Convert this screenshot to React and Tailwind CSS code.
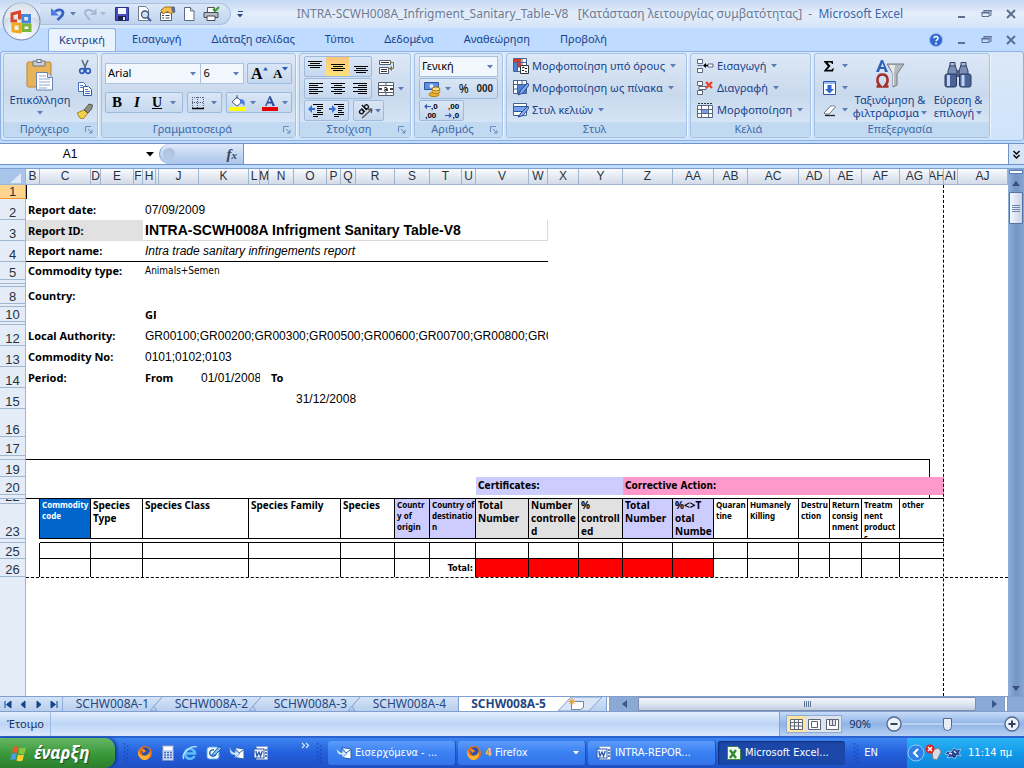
import React from 'react';

const UI = 'font-["Noto_Sans","Open_Sans",sans-serif]';

function Arrow({ className = 'text-[#5b7db5]' }) {
  return (
    <svg width="6" height="4" viewBox="0 0 6 4" className={`shrink-0 ${className}`} aria-hidden="true">
      <path d="M0 0h6L3 3.6z" fill="currentColor" />
    </svg>
  );
}

/* ---------- icons ---------- */

function Svg({ w = 16, h = 16, vb, children, className = '' }) {
  return (
    <svg width={w} height={h} viewBox={vb || `0 0 ${w} ${h}`} className={`shrink-0 ${className}`} aria-hidden="true">
      {children}
    </svg>
  );
}

const IconUndo = () => (
  <Svg>
    <path d="M5 5.500c4-3 8-1.500 8 1.500 0 3-3 4-5.500 7" fill="none" stroke="#3463c4" strokeWidth="2.800" />
    <path d="M1 2v7.500h8z" fill="#4a7be0" />
  </Svg>
);
const IconRedo = () => (
  <Svg>
    <path d="M11 5.500C7 2.500 3 4 3 7c0 3 3 4 5 7" fill="none" stroke="#a9b9d3" strokeWidth="2.200" />
    <path d="M14.500 2v7H8z" fill="#a9b9d3" />
  </Svg>
);
const IconSave = () => (
  <Svg>
    <path d="M1.500 1.500h13v13h-13z" fill="#4a4fc0" stroke="#22308c" />
    <path d="M4 2h8v6H4z" fill="#f4f7ff" />
    <path d="M4 10h8v4.500H4z" fill="#1c2350" />
    <path d="M9 11h2v3H9z" fill="#dfe6fa" />
  </Svg>
);
const IconPreview = () => (
  <Svg>
    <path d="M2.500.5h7l3 3v11h-10z" fill="#fff" stroke="#6f7d94" />
    <circle cx="9" cy="8.500" r="3.500" fill="#cfe3f8" stroke="#40546e" strokeWidth="1.300" />
    <path d="M11.500 11.500l3.500 3.500" stroke="#3b5c9c" strokeWidth="2" />
  </Svg>
);
const IconProps = () => (
  <Svg w={18}>
    <path d="M2.500 6.500h11v8h-11z" fill="#fff" stroke="#56606e" />
    <path d="M4 9.500h2M7.500 9.500h4M4 12h2M7.500 12h4" stroke="#404b60" />
    <path d="M3 4l4-3 9 0 1 5-4 1.500L9 5.500 5 8z" fill="#f2c14e" stroke="#a47318" />
    <path d="M13 1h4v5h-3z" fill="#5b6f96" />
  </Svg>
);
const IconPage = () => (
  <Svg>
    <path d="M3.500 1.500h6l3.500 3.500v9.500H3.500z" fill="#fff" stroke="#5c6c86" />
    <path d="M9.500 1.500V5H13" fill="#d7e0ee" stroke="#5c6c86" />
  </Svg>
);
const IconPrint = () => (
  <Svg w={17}>
    <path d="M4.500 1.500h7V7h-7z" fill="#fff" stroke="#555" />
    <path d="M1 6.500h14v5H1z" fill="#b9bec6" stroke="#444b55" />
    <path d="M4 10h8v4.500H4z" fill="#fff" stroke="#444b55" />
    <path d="M10 3l2 2 4-4" fill="none" stroke="#33a02c" strokeWidth="2" />
  </Svg>
);
const IconPaste = () => (
  <Svg w={28} h={32}>
    <rect x="1" y="3" width="24" height="25" rx="1.500" fill="#e8b45a" stroke="#b98430" />
    <path d="M7 2h12v5H7z" fill="#c8ced6" stroke="#6f7781" />
    <rect x="11" y=".5" width="4" height="3" fill="#eef1f5" stroke="#6f7781" />
    <path d="M10.500 13.500h11l5 5v12.500h-16z" fill="#fff" stroke="#6a83b5" />
    <path d="M21.500 13.500v5h5" fill="#d5e1f4" stroke="#6a83b5" />
    <path d="M13 17h7M13 20h11M13 23h11M13 26h11M13 29h8" stroke="#8ea7d3" />
  </Svg>
);
const IconCut = () => (
  <Svg>
    <path d="M5 1l4 9M11 1L7 10" stroke="#5a6b86" strokeWidth="1.600" />
    <circle cx="5" cy="12" r="2.300" fill="none" stroke="#2c5ab8" strokeWidth="1.700" />
    <circle cx="11" cy="12" r="2.300" fill="none" stroke="#2c5ab8" strokeWidth="1.700" />
  </Svg>
);
const IconCopy = () => (
  <Svg>
    <path d="M1.500 1.500h5l2 2v7h-7z" fill="#fff" stroke="#4a6fb4" />
    <path d="M6.500 5.500h5l3 3v6h-8z" fill="#fff" stroke="#2f5cab" />
    <path d="M3 4.500h3M3 6.500h3M8 8.500h3M8 10.500h5M8 12.500h5" stroke="#4a78c8" />
  </Svg>
);
const IconBrush = () => (
  <Svg>
    <path d="M0 10l7-3 4 3-5 6-3-1z" fill="#f3d04e" stroke="#a98413" />
    <path d="M7 7l5-6 3.500 1-1 4-3.500 4z" fill="#8c8f84" stroke="#55574c" />
  </Svg>
);
const IconBorders = () => (
  <Svg w={14} h={14}>
    <path d="M1 1.500h12M1 6.500h12M1.500 1v11M6.500 1v11M12.500 1v11" stroke="#55627a" strokeDasharray="1 1" />
    <path d="M1 12.500h12" stroke="#000" strokeWidth="1.500" />
  </Svg>
);
const IconFill = () => (
  <Svg>
    <path d="M2 7l5-5 5 5-5 4z" fill="#fff" stroke="#4b5e86" />
    <path d="M7 4V0" stroke="#4b5e86" />
    <path d="M10 4c4 0 6 3 4 7-1-2-2-3-4-3z" fill="#4a7be0" />
    <path d="M0 12h16v4H0z" fill="#ffff00" />
  </Svg>
);
const IconFontColor = () => (
  <Svg>
    <path d="M3 11L7.500 1h1L13 11h-2.500l-1-2.600h-4L4.600 11zM6.200 6.700h2.600L7.500 3.500z" fill="#2a4f9e" />
    <path d="M0 12h16v4H0z" fill="#e60000" />
  </Svg>
);
function Lines({ rows, dy = 0 }) {
  return (
    <Svg w={16} h={14}>
      {rows.map(([x, w], i) => (
        <rect key={i} x={x} y={dy + i * 2} width={w} height="1" fill="#000" />
      ))}
    </Svg>
  );
}
const IconTop = () => <Lines dy={1} rows={[[1, 14], [3, 10], [1, 14], [3, 10]]} />;
const IconMiddle = () => <Lines dy={4} rows={[[1, 14], [3, 10], [1, 14], [3, 10]]} />;
const IconBottom = () => <Lines dy={6} rows={[[1, 14], [3, 10], [1, 14], [3, 10]]} />;
const IconLeft = () => <Lines dy={1} rows={[[1, 14], [1, 9], [1, 14], [1, 9], [1, 14], [1, 9]]} />;
const IconCenter = () => <Lines dy={1} rows={[[1, 14], [4, 8], [1, 14], [4, 8], [1, 14], [4, 8]]} />;
const IconRight = () => <Lines dy={1} rows={[[1, 14], [6, 9], [1, 14], [6, 9], [1, 14], [6, 9]]} />;
const IconIndent = ({ flip }) => (
  <Svg>
    <path d="M5 1.500h10M9 3.500h6M9 5.500h6M9 7.500h4M9 9.500h6M5 11.500h10M5 13.500h5" stroke="#000" />
    <path d={flip ? 'M0 5h3V2l4 4-4 4V7H0z' : 'M7 5H4V2L0 6l4 4V7h3z'} fill="#3a6fd0" />
  </Svg>
);
const IconWrap = () => (
  <Svg w={17}>
    <path d="M1.500 1.500h11v4h-11zM1.500 8.500h9v6h-9z" fill="#fff" stroke="#555e70" />
    <path d="M3 3.500h8M3 10.500h6M3 12.500h6" stroke="#333" />
    <path d="M12 3.500h3.500v6H13" fill="none" stroke="#8a6d2f" />
    <path d="M14 7l-3 2.500 3 2.500z" fill="#8a6d2f" />
  </Svg>
);
const IconMerge = () => (
  <Svg>
    <path d="M.5 1.500h15v13H.5zM.5 4.500h15M.5 11.500h15M8 1.500v3M8 11.500v3" fill="#fff" stroke="#555e70" />
    <path d="M1 8h3M12 8h3" stroke="#000" strokeWidth="1.500" />
    <path d="M6.200 7c1-.8 3-.6 3 .7V10M9 8.300c-3-.2-3.400 1.700-1.800 1.700 1 0 1.800-.6 1.800-1" fill="none" stroke="#000" />
  </Svg>
);
const IconOrient = () => (
  <Svg w={18}>
    <path d="M5 15L15 6M15 6l-4 .5M15 6l-.8 4" stroke="#555" fill="none" strokeWidth="1.300" />
    <g transform="rotate(-45 7 7)" fill="none" stroke="#111" strokeWidth="1.300">
      <circle cx="4" cy="6.500" r="2" />
      <path d="M6.300 4v5M9 2v7" />
      <circle cx="11" cy="6.500" r="2" />
    </g>
  </Svg>
);
const IconCurrency = () => (
  <Svg w={17} h={16}>
    <path d="M.5 1.500h14v7H.5z" fill="#5f8fe0" stroke="#2d56a8" />
    <circle cx="7.500" cy="5" r="2" fill="#dbe8ff" />
    <ellipse cx="10" cy="13.500" rx="5" ry="2" fill="#f2b62c" stroke="#a9760c" />
    <ellipse cx="12" cy="10.500" rx="4" ry="2" fill="#f8cf5b" stroke="#a9760c" />
    <ellipse cx="12" cy="8" rx="4" ry="2" fill="#fbe08c" stroke="#a9760c" />
  </Svg>
);
const IconGrid = ({ children }) => (
  <Svg>
    <path d="M.5.5h13v13H.5zM.5 4.500h13M.5 9h13M4.500.5v13M9 .5v13" fill="#fff" stroke="#49618f" />
    {children}
  </Svg>
);
const IconCond = () => (
  <IconGrid>
    <path d="M1 1h7v3H1zM5 5h3v4H5z" fill="#d43c2e" />
    <path d="M1 5h3v8H1z" fill="#4d7fd6" />
    <path d="M7.500 7.500h8v8h-8z" fill="#fff" stroke="#333" />
    <path d="M9 10l2-1v1M9 12.500h2M12 10.500h2M12 13l2 1" stroke="#111" fill="none" />
  </IconGrid>
);
const IconTableFmt = () => (
  <IconGrid>
    <path d="M5 5h8v8H5z" fill="#4d7fd6" />
    <path d="M14.500 3L8 10l-3 5 5-2 6-8z" fill="#7fa9ec" stroke="#23488f" />
  </IconGrid>
);
const IconCellStyle = () => (
  <Svg>
    <path d="M.5 1.500h13v3H.5zM.5 9.500h13v4H.5z" fill="#fff" stroke="#49618f" />
    <path d="M.5 4.500h13v5H.5z" fill="#78a4ee" stroke="#2d56a8" />
    <path d="M15 4l-7 7-3 4 5-1.500 5.500-7z" fill="#8fb4f0" stroke="#23488f" />
  </Svg>
);
const IconInsert = () => (
  <Svg w={17}>
    <path d="M.5 1.500h5v4h-5zM.5 10.500h5v4h-5zM.5 7.500h5M11 6h5v3h-5z" fill="#fff" stroke="#5a6780" />
    <path d="M7 7.500h4" stroke="#000" strokeWidth="1.500" />
    <path d="M9 5L6 7.500 9 10z" fill="#000" />
  </Svg>
);
const IconDelete = () => (
  <Svg w={17}>
    <path d="M.5 1.500h5v4h-5zM.5 10.500h5v4h-5zM2 6.500h7v3H2z" fill="#fff" stroke="#5a6780" />
    <path d="M9 2l6 6M15 2L9 8" stroke="#e8452c" strokeWidth="2.400" />
  </Svg>
);
const IconFormat = () => (
  <Svg w={17}>
    <path d="M.5 3.500h15v12H.5zM.5 7.500h15M.5 11.500h15M4.500 3.500v12M11.500 3.500v12" fill="#fff" stroke="#5a6780" />
    <path d="M5 8h6v3H5z" fill="#6f9ceb" />
    <path d="M1 1.500h14" stroke="#333" strokeDasharray="2 1" />
  </Svg>
);
const IconSum = () => (
  <Svg w={14} h={14}>
    <path d="M2 2h9v3h-1C9.500 4 9 3.500 8 3.500H5.500L8.500 7 5 10.700h3.500c1.200 0 1.800-.5 2.300-1.500h1L11 12.500H2v-.8L5.800 7.200 2 2.800z" fill="#000" />
  </Svg>
);
const IconFillDown = () => (
  <Svg>
    <path d="M1.500 1.500h12v13h-12z" fill="#fff" stroke="#2b57b0" />
    <path d="M2 2h11v2H2z" fill="#9dbcf0" />
    <path d="M5.500 5h4v4H12l-4.500 4.500L3 9h2.500z" fill="#2f66d0" />
  </Svg>
);
const IconEraser = () => (
  <Svg w={16} h={14}>
    <path d="M2 10l6-6.500c1-1 6-1 5.500.5L7 11H3z" fill="#fff" stroke="#6b7486" />
    <path d="M3 12.500h10" stroke="#222" strokeWidth="1.300" />
  </Svg>
);
const IconSort = () => (
  <Svg w={30} h={30}>
    <path d="M1 13L6 1h2l5 12h-3l-1-3H5l-1 3zM6 8h3L7.400 4z" fill="#2e62b8" />
    <path d="M12 5h17l-7 10v11l-4 2V15z" fill="#b5b8bd" stroke="#777b82" />
    <path d="M14 6h6l-1 9v11l-1 1V15z" fill="#e6e8ea" />
    <path d="M1.500 27.500h4c-5-5-3.500-12 2-12s7 7 2 12h4" fill="none" stroke="#a3302a" strokeWidth="2.600" />
  </Svg>
);
const IconFind = () => (
  <Svg w={30} h={28}>
    <path d="M5 10l2-6h5l2 6v4H5zM16 10l2-6h5l2 6v4h-9z" fill="#7b8fb4" stroke="#33456b" />
    <path d="M7 1.500h5V5H7zM18 1.500h5V5h-5z" fill="#a9b8d3" stroke="#33456b" />
    <path d="M13 9h4v7h-4z" fill="#4b5f88" />
    <rect x="2" y="13" width="11.500" height="13" rx="2" fill="#4a6498" stroke="#24365c" />
    <rect x="16.500" y="13" width="11.500" height="13" rx="2" fill="#4a6498" stroke="#24365c" />
    <path d="M5.500 14v11M20 14v11" stroke="#c3d2ee" strokeWidth="3" />
  </Svg>
);

/* ---------- window chrome ---------- */

function WindowButtons({ help }) {
  return (
    <div className="flex items-center gap-[14px] pr-2 text-[#5c6f8f]">
      {help && (
        <button type="button" aria-label="Βοήθεια">
          <Svg w={14} h={14}>
            <circle cx="7" cy="7" r="6.500" fill="#2f68d0" stroke="#9ab7e6" />
            <path d="M5 5.300c0-2.400 4-2.400 4 0 0 1.500-2 1.500-2 3" stroke="#fff" strokeWidth="1.500" fill="none" />
            <circle cx="7" cy="10.500" r="1" fill="#fff" />
          </Svg>
        </button>
      )}
      <button type="button" aria-label="Ελαχιστοποίηση">
        <Svg w={10} h={10}><path d="M1 8h7" stroke="currentColor" strokeWidth="2" /></Svg>
      </button>
      <button type="button" aria-label="Επαναφορά">
        <Svg w={11} h={10}>
          <path d="M3 3V1.500h7v5H8.500M1 3.500h7v4H1z" fill="none" stroke="currentColor" />
          <path d="M2.500 1h8v1.500h-8zM.5 3h8v1.500h-8z" fill="currentColor" />
        </Svg>
      </button>
      <button type="button" aria-label="Κλείσιμο">
        <Svg w={10} h={10}><path d="M1 1l8 8M9 1L1 9" stroke="currentColor" strokeWidth="2" /></Svg>
      </button>
    </div>
  );
}

function Orb() {
  return (
    <button type="button" aria-label="Κουμπί του Office" className="absolute top-0.5 left-0.5">
      <Svg w={39} h={39}>
        <defs>
          <radialGradient id="orb" cx=".5" cy=".85" r=".9">
            <stop offset="0" stopColor="#ffffff" />
            <stop offset=".5" stopColor="#dfe6f1" />
            <stop offset="1" stopColor="#aebdd4" />
          </radialGradient>
        </defs>
        <circle cx="19.500" cy="19.500" r="18.500" fill="url(#orb)" stroke="#7488a8" />
        <path d="M3 17a16.500 16.500 0 0 1 33 0c-9-4-24-4-33 0z" fill="#fff" opacity=".5" />
        <g fill="none" strokeWidth="3">
          <path d="M17.500 17.500V10l-7.500 2v7h5" stroke="#d9472b" />
          <path d="M20.500 13.500h7v6.500h-6.500z" stroke="#4a86d8" />
          <path d="M11 22h7v8l-7-1z" stroke="#f0a91e" />
          <path d="M21 23h7v5.500h-7z" stroke="#7db63a" />
        </g>
      </Svg>
    </button>
  );
}

function TitleBar() {
  const quick = [
    ['Αποθήκευση', <IconSave />],
    ['Προεπισκόπηση εκτύπωσης', <IconPreview />],
    ['Ιδιότητες', <IconProps />],
    ['Δημιουργία', <IconPage />],
    ['Γρήγορη εκτύπωση', <IconPrint />],
  ];
  return (
    <header className="flex h-7 items-center bg-linear-to-b from-[#c5d9f3] via-[#e4eefb] to-[#d4e4f8]">
      <div className="ml-10 flex h-[22px] w-[191px] items-center rounded-r-full border border-l-0 border-[#a9c1e3] bg-linear-to-b from-[#dce8f8] to-[#bfd3ee] pl-2.5">
        <button type="button" aria-label="Αναίρεση" className="flex items-center gap-1"><IconUndo /><Arrow /></button>
        <button type="button" aria-label="Ακύρωση αναίρεσης" className="ml-1.5 flex items-center gap-0.5"><IconRedo /><Arrow className="text-[#a9b9d3]" /></button>
        <div className="ml-2 flex flex-1 items-center justify-between pr-2.5">
          {quick.map(([label, icon]) => <button key={label} type="button" aria-label={label}>{icon}</button>)}
        </div>
      </div>
      <button type="button" aria-label="Προσαρμογή γραμμής" className="ml-1.5 flex flex-col items-center gap-0.5">
        <span className="h-px w-[5px] bg-[#2b4a86]" />
        <Arrow className="text-[#2b4a86]" />
      </button>
      <h1 className="flex-1 text-center text-[12px] whitespace-pre text-[#6f7b91]">
        INTRA-SCWH008A_Infrigment_Sanitary_Table-V8   [Κατάσταση λειτουργίας συμβατότητας]  -  <span className="text-[#3d66a8]">Microsoft Excel</span>
      </h1>
      <WindowButtons />
    </header>
  );
}

function TabStrip() {
  const tabs = ['Εισαγωγή', 'Διάταξη σελίδας', 'Τύποι', 'Δεδομένα', 'Αναθεώρηση', 'Προβολή'];
  return (
    <nav className="flex h-[23px] items-center bg-[#bfdbff] pl-12 text-[11px] text-[#15428b]">
      <button type="button" className="h-full w-[68px] rounded-t-[3px] border border-b-0 border-[#8db2e3] bg-[#eaf3fd]">Κεντρική</button>
      <div className="ml-4 flex flex-1 items-center gap-[30px]">
        {tabs.map((t) => <button key={t} type="button">{t}</button>)}
      </div>
      <WindowButtons help />
    </nav>
  );
}

/* ---------- ribbon ---------- */

function Group({ title, className, launcher, children }) {
  return (
    <section className={`flex flex-col rounded-[3px] border border-[#a5c1e4] bg-linear-to-b from-[#dce8f6] via-[#c9d9ed] to-[#dcebfb] shadow-[1px_0_0_#eef5fd] ${className}`}>
      <div className="min-h-0 flex-1">{children}</div>
      <h2 className="flex h-[15px] items-center bg-[#c1d9f1] pr-1 text-[11px] text-[#3e6aaa]">
        <span className="flex-1 text-center">{title}</span>
        {launcher && (
          <button type="button" aria-label={`Επιλογές: ${title}`}>
            <Svg w={8} h={8}>
              <path d="M.5 6V.5H6" fill="none" stroke="#6b8cbf" />
              <path d="M3 3l4 4M7 4v3H4" fill="none" stroke="#6b8cbf" />
            </Svg>
          </button>
        )}
      </h2>
    </section>
  );
}

function Box({ className = '', children }) {
  return (
    <div className={`flex h-[21px] items-center justify-around rounded-[2px] border border-[#9db9de] bg-linear-to-b from-[#d9e6f6] to-[#c6d8ee] ${className}`}>
      {children}
    </div>
  );
}

function Drop({ label, value, className }) {
  return (
    <label className={`flex h-[21px] items-center border border-[#abc1de] bg-[#f2f7fd] pr-1 ${className}`}>
      <select aria-label={label} defaultValue={value} className="min-w-0 flex-1 appearance-none bg-transparent pl-0.5 text-[11px] text-black outline-none">
        <option>{value}</option>
      </select>
      <Arrow />
    </label>
  );
}

function Item({ icon, children }) {
  return (
    <button type="button" className="flex h-[22px] items-center gap-[3px] text-[11px] whitespace-nowrap text-[#15428b]">
      {icon}
      <span>{children}</span>
      <Arrow className="ml-0.5 text-[#5b7db5]" />
    </button>
  );
}

const glyph = 'font-["Liberation_Serif",serif] text-black';

function Ribbon() {
  return (
    <div className="flex h-[90px] gap-[3px] rounded-[3px] border border-[#8db2e3] bg-linear-to-b from-[#dbe8f8] to-[#cfe3fa] px-0.5 pt-px pb-0.5">
      <Group title="Πρόχειρο" launcher className="w-[95px]">
        <div className="flex h-full items-start gap-1.5 pt-[5px] pl-[5px]">
          <button type="button" className="flex w-[62px] flex-col items-center text-[11px] leading-[14px] text-[#15428b]">
            <IconPaste />
            <span className="mt-0.5">Επικόλληση</span>
            <Arrow className="mt-1 text-[#5b7db5]" />
          </button>
          <div className="flex flex-col gap-1.5">
            <button type="button" aria-label="Αποκοπή"><IconCut /></button>
            <button type="button" aria-label="Αντιγραφή"><IconCopy /></button>
            <button type="button" aria-label="Πινέλο μορφοποίησης"><IconBrush /></button>
          </div>
        </div>
      </Group>

      <Group title="Γραμματοσειρά" launcher className="w-[195px]">
        <div className="flex flex-col gap-2 px-[3px] pt-[9px]">
          <div className="flex">
            <Drop label="Γραμματοσειρά" value="Arial" className="w-[97px]" />
            <Drop label="Μέγεθος" value="6" className="w-[43px] border-l-0" />
            <Box className="ml-[3px] w-[45px]">
              <button type="button" aria-label="Αύξηση μεγέθους" className={`flex items-start text-[16px] leading-[18px] font-bold ${glyph}`}>A<svg width="5" height="4" className="mt-0.5" aria-hidden="true"><path d="M0 3.500h5L2.500 0z" fill="#2c5ab8" /></svg></button>
              <button type="button" aria-label="Μείωση μεγέθους" className={`flex items-start text-[13px] leading-[18px] font-bold ${glyph}`}>A<Arrow className="mt-0.5 text-[#2c5ab8]" /></button>
            </Box>
          </div>
          <div className="flex gap-1">
            <Box className="w-[79px]">
              <button type="button" aria-label="Έντονα" className={`text-[15px] font-bold ${glyph}`}>B</button>
              <button type="button" aria-label="Πλάγια" className={`text-[15px] font-bold italic ${glyph}`}>I</button>
              <button type="button" aria-label="Υπογράμμιση" className={`flex items-center gap-2 text-[14px] font-bold ${glyph}`}><span className="underline">U</span><Arrow /></button>
            </Box>
            <Box className="w-[35px]">
              <button type="button" aria-label="Περιγράμματα" className="flex items-center gap-1.5"><IconBorders /><Arrow /></button>
            </Box>
            <Box className="w-[67px]">
              <button type="button" aria-label="Χρώμα γεμίσματος" className="flex items-center gap-1"><IconFill /><Arrow /></button>
              <button type="button" aria-label="Χρώμα γραμματοσειράς" className="flex items-center gap-1"><IconFontColor /><Arrow /></button>
            </Box>
          </div>
        </div>
      </Group>

      <Group title="Στοίχιση" launcher className="w-[112px]">
        <div className="flex flex-col gap-px px-1 pt-0.5">
          <div className="flex items-center gap-1.5">
            <Box className="w-[68px]">
              <button type="button" aria-label="Στοίχιση επάνω"><IconTop /></button>
              <button type="button" aria-label="Στοίχιση στο μέσο" className="flex h-full w-[23px] items-center justify-center bg-linear-to-b from-[#fbc57c] to-[#ffe27a]"><IconMiddle /></button>
              <button type="button" aria-label="Στοίχιση κάτω"><IconBottom /></button>
            </Box>
            <button type="button" aria-label="Αναδίπλωση κειμένου"><IconWrap /></button>
          </div>
          <div className="flex items-center gap-1.5">
            <Box className="w-[68px]">
              <button type="button" aria-label="Στοίχιση αριστερά"><IconLeft /></button>
              <button type="button" aria-label="Στοίχιση στο κέντρο"><IconCenter /></button>
              <button type="button" aria-label="Στοίχιση δεξιά"><IconRight /></button>
            </Box>
            <button type="button" aria-label="Συγχώνευση κελιών" className="flex items-center gap-1"><IconMerge /><Arrow /></button>
          </div>
          <div className="flex items-center gap-1">
            <Box className="w-[45px]">
              <button type="button" aria-label="Μείωση εσοχής"><IconIndent /></button>
              <button type="button" aria-label="Αύξηση εσοχής"><IconIndent flip /></button>
            </Box>
            <Box className="w-[31px]">
              <button type="button" aria-label="Προσανατολισμός" className="flex items-center"><IconOrient /><Arrow /></button>
            </Box>
          </div>
        </div>
      </Group>

      <Group title="Αριθμός" launcher className="w-[89px]">
        <div className="flex flex-col gap-px px-1 pt-0.5">
          <Drop label="Μορφή αριθμού" value="Γενική" className="w-[79px]" />
          <Box className="w-[79px]">
            <button type="button" aria-label="Νομισματική μορφή" className="flex items-center gap-1"><IconCurrency /><Arrow /></button>
            <button type="button" className="text-[12px] text-black">%</button>
            <button type="button" className='font-["Liberation_Sans",sans-serif] text-[10px] font-bold text-[#222]'>000</button>
          </Box>
          <Box className='w-[45px] font-["Liberation_Sans",sans-serif] text-[8px] leading-[9px] font-bold text-black'>
            <button type="button" className="flex flex-col">
              <span className="flex items-center"><Svg w={7} h={5}><path d="M7 2.500H1M3 .5l-2 2 2 2" fill="none" stroke="#2c5ab8" strokeWidth="1.200" /></Svg>,0</span>
              <span>,00</span>
            </button>
            <button type="button" className="flex flex-col items-end">
              <span>,00</span>
              <span className="flex items-center"><Svg w={7} h={5}><path d="M0 2.500h6M4 .5l2 2-2 2" fill="none" stroke="#2c5ab8" strokeWidth="1.200" /></Svg>,0</span>
            </button>
          </Box>
        </div>
      </Group>

      <Group title="Στυλ" className="w-[181px]">
        <div className="flex flex-col pt-px pl-1.5">
          <Item icon={<IconCond />}>Μορφοποίηση υπό όρους</Item>
          <Item icon={<IconTableFmt />}>Μορφοποίηση ως πίνακα</Item>
          <Item icon={<IconCellStyle />}>Στυλ κελιών</Item>
        </div>
      </Group>

      <Group title="Κελιά" className="w-[121px]">
        <div className="flex flex-col pt-px pl-1.5">
          <Item icon={<IconInsert />}>Εισαγωγή</Item>
          <Item icon={<IconDelete />}>Διαγραφή</Item>
          <Item icon={<IconFormat />}>Μορφοποίηση</Item>
        </div>
      </Group>

      <Group title="Επεξεργασία" className="w-[176px]">
        <div className="flex pt-px pl-[7px]">
          <div className="flex w-[30px] flex-col">
            <button type="button" aria-label="Άθροιση" className="flex h-[22px] items-center justify-between pr-1"><IconSum /><Arrow /></button>
            <button type="button" aria-label="Γέμισμα" className="flex h-[22px] items-center justify-between pr-1"><IconFillDown /><Arrow /></button>
            <button type="button" aria-label="Απαλοιφή" className="flex h-[22px] items-center justify-between pr-1"><IconEraser /><Arrow /></button>
          </div>
          <button type="button" className="flex w-[76px] flex-col items-center pt-1 text-[11px] leading-[13px] whitespace-nowrap text-[#15428b]">
            <IconSort />
            <span className="mt-1">Ταξινόμηση &amp;</span>
            <span className="flex items-center gap-0.5">φιλτράρισμα<Arrow /></span>
          </button>
          <button type="button" className="flex w-[60px] flex-col items-center pt-1.5 text-[11px] leading-[13px] whitespace-nowrap text-[#15428b]">
            <IconFind />
            <span className="mt-1">Εύρεση &amp;</span>
            <span className="flex items-center gap-0.5">επιλογή<Arrow /></span>
          </button>
        </div>
      </Group>
    </div>
  );
}

function FormulaBar() {
  return (
    <div className="mt-0.5 flex h-[22px] border-y border-[#6f93c9] bg-white">
      <input aria-label="Πλαίσιο ονόματος" defaultValue="A1" className='w-[140px] bg-white text-center font-["Liberation_Sans",sans-serif] text-[12px] outline-none' />
      <button type="button" aria-label="Λίστα ονομάτων" className="flex w-[19px] items-center justify-center">
        <svg width="8" height="5" aria-hidden="true"><path d="M0 0h8L4 4.500z" fill="#000" /></svg>
      </button>
      <div className="flex w-[84px] items-center justify-between rounded-l-full border-l border-[#7e9fce] bg-linear-to-b from-[#dfeafa] to-[#a9c4ea] pr-1.5 pl-[3px]">
        <span className="size-3 rounded-full bg-[#b5c8e4] shadow-inner" />
        <button type="button" aria-label="Εισαγωγή συνάρτησης" className='font-["Liberation_Serif",serif] text-[15px] leading-4 font-bold text-[#3b4658] italic'>
          f<span className="text-[11px]">x</span>
        </button>
      </div>
      <input aria-label="Γραμμή τύπων" className="min-w-0 flex-1 border-l border-[#6f93c9] bg-white px-1 text-[12px] outline-none" />
      <button type="button" aria-label="Ανάπτυξη γραμμής τύπων" className="flex w-4 items-center justify-center border-l border-[#6f93c9] bg-[#d6e4f7]">
        <Svg w={7} h={9}><path d="M.5 1l3 3 3-3M.5 5l3 3 3-3" fill="none" stroke="#000" strokeWidth="1.400" /></Svg>
      </button>
    </div>
  );
}

/* ---------- sheet ---------- */

const COLS = [
  ['B', 14], ['C', 51], ['D', 10], ['E', 33], ['F', 9], ['H', 13], ['I', 3], ['J', 40], ['K', 50], ['L', 11],
  ['M', 9], ['N', 25], ['O', 33], ['P', 14], ['Q', 15], ['R', 39], ['S', 35], ['T', 32], ['U', 14], ['V', 53],
  ['W', 19], ['X', 31], ['Y', 44], ['Z', 50], ['AA', 41], ['AB', 34], ['AC', 51], ['AD', 31], ['AE', 32],
  ['AF', 38], ['AG', 30], ['AH', 14], ['AI', 14],
];

const label = 'pl-0.5 text-[11px] font-bold font-["Noto_Sans",sans-serif]';
const value = 'pl-0.5 text-[12px] font-["Liberation_Sans",sans-serif]';
const band = 'pl-0.5 text-[10px] font-bold font-["DejaVu_Sans_Condensed","DejaVu_Sans",sans-serif]';

const AUTH = 'GR00100;GR00200;GR00300;GR00500;GR00600;GR00700;GR00800;GR00900';

const ROWS = [
  ['1', 14, [[34, '', 'border-l border-black']]],
  ['2', 21, [[5, 'Report date:', label], [29, '07/09/2009', value]]],
  ['3', 21, [
    [5, 'Report ID:', `${label} bg-[#e1e1e1]`],
    [16, 'INTRA-SCWH008A Infrigment Sanitary Table-V8', 'pl-0.5 text-[14px] font-bold font-["Liberation_Sans",sans-serif] border-r border-b border-[#d9d9d9]'],
    [13, '', ''],
  ]],
  ['4', 21, [
    [5, 'Report name:', `${label} border-b border-black`],
    [16, 'Intra trade sanitary infringements report', `${value} italic border-b border-black`],
    [13, '', ''],
  ]],
  ['5', 18, [[5, 'Commodity type:', label], [29, 'Animals+Semen', 'pl-0.5 text-[10px] font-["DejaVu_Sans_Condensed","DejaVu_Sans",sans-serif]']]],
  ['', 4, [[34, '', '']]],
  ['', 3, [[34, '', '']]],
  ['8', 17, [[5, 'Country:', label], [29, '', '']]],
  ['', 3, [[34, '', '']]],
  ['10', 15, [[5, '', ''], [1, 'GR', 'pl-0.5 text-[11px] font-bold font-["Noto_Sans",sans-serif]'], [28, '', '']]],
  ['', 3, [[34, '', '']]],
  ['12', 21, [[5, 'Local Authority:', label], [16, AUTH, value], [13, '', '']]],
  ['13', 21, [[5, 'Commodity No:', label], [29, '0101;0102;0103', value]]],
  ['14', 21, [[5, 'Period:', label], [3, 'From', label], [2, '01/01/2008', value], [1, '', ''], [23, 'To', label]]],
  ['15', 21, [[12, '', ''], [3, '31/12/2008', value], [19, '', '']]],
  ['16', 28, [[34, '', '']]],
  ['17', 19, [[34, '', '']]],
  ['', 4, [[31, '', 'border-b border-black'], [3, '', '']]],
  ['19', 17, [[31, '', 'border-r border-black'], [3, '', '']]],
  ['20', 18, [[19, '', ''], [4, 'Certificates:', `${band} bg-[#ccccff]`], [9, 'Corrective Action:', `${band} bg-[#ff99cc]`], [2, '', '']]],
  ['', 4, [[31, '', 'border-b border-r border-black'], [1, '', 'border-b border-black'], [2, '', '']]],
];

const big = 'text-[10px] leading-[13px]';
const small = 'text-[8px] leading-[11px]';
const HEADS = [
  [1, ['Commodity', 'code'], `${small} bg-[#0066cc] text-white`],
  [3, ['Species', 'Type'], big],
  [4, ['Species Class'], big],
  [5, ['Species Family'], big],
  [2, ['Species'], big],
  [1, ['Countr', 'y of', 'origin'], `${small} bg-[#ccccff]`],
  [2, ['Country of', 'destinatio', 'n'], `${small} bg-[#ccccff]`],
  [1, ['Total', 'Number'], `${big} bg-[#e1e1e1]`],
  [2, ['Number', 'controlle', 'd'], `${big} bg-[#e1e1e1]`],
  [1, ['%', 'controll', 'ed'], `${big} bg-[#e1e1e1]`],
  [1, ['Total', 'Number'], `${big} bg-[#ccccff]`],
  [1, ['%<>T', 'otal', 'Numbe'], `${big} bg-[#ccccff]`],
  [1, ['Quaran', 'tine'], small],
  [1, ['Humanely', 'Killing'], small],
  [1, ['Destru', 'ction'], small],
  [1, ['Return', 'consig', 'nment'], small],
  [1, ['Treatm', 'nent', 'product', 's'], small],
  [2, ['other'], small],
];

const rowHead = 'border-r border-b border-[#9eb6ce] bg-[#e4ecf7] p-0 font-normal text-[#27323f] align-bottom';

function RowHead({ n, h }) {
  return (
    <th scope="row" className={n === '1' ? 'border-r border-b border-[#f29536] bg-[#ffd58d] p-0 align-bottom font-normal text-[#27323f]' : rowHead}>
      <div className='flex items-end justify-center overflow-hidden font-["Liberation_Sans",sans-serif] text-[13px] leading-[13px]' style={{ height: h - 1 }}>
        {n}
      </div>
    </th>
  );
}

function Sheet() {
  return (
    <div className="relative flex min-w-0 flex-1 flex-col overflow-hidden bg-white">
      <table className="w-full table-fixed border-separate border-spacing-0 text-left text-black">
        <colgroup>
          <col className="w-[26px]" />
          {COLS.map(([c, w]) => <col key={c} style={{ width: w }} />)}
          <col />
        </colgroup>
        <thead>
          <tr>
            <th className="h-4 border-r border-b border-[#9eb6ce] bg-[#a9c4e9] p-0">
              <svg width="22" height="14" className="block" aria-hidden="true"><path d="M21 3v10H10z" fill="#dfe9f7" /></svg>
            </th>
            {[...COLS.map((c) => c[0]), 'AJ'].map((c) => (
              <th key={c} scope="col" className="h-4 overflow-hidden border-r border-b border-[#9eb6ce] bg-linear-to-b from-[#f8fafd] to-[#d3dbe8] p-0 font-normal text-[#27323f]">
                <div className='flex justify-center overflow-hidden font-["Liberation_Sans",sans-serif] text-[12px] leading-[15px]'>{c === 'I' ? '' : c}</div>
              </th>
            ))}
          </tr>
        </thead>
        <tbody>
          {ROWS.map(([n, h, cells], i) => (
            <tr key={i}>
              <RowHead n={n} h={h} />
              {cells.map(([span, text, cls], j) => (
                <td key={j} colSpan={span} className={`overflow-hidden p-0 leading-[14px] whitespace-nowrap ${cls}`}>{text}</td>
              ))}
            </tr>
          ))}
          <tr>
            <RowHead n="22" h={5} />
            <td rowSpan={2} className="border-r border-black p-0" />
            {HEADS.map(([span, lines, cls], i) => (
              <td key={i} rowSpan={2} colSpan={span} className={`border-b border-black p-0 align-top font-["Noto_Sans",sans-serif] font-bold whitespace-nowrap ${i < HEADS.length - 1 ? 'border-r' : ''} ${cls}`}>
                <div className="h-[39px] overflow-hidden pl-0.5">
                  {lines.map((l) => <div key={l}>{l}</div>)}
                </div>
              </td>
            ))}
            <td rowSpan={2} colSpan={2} className="p-0" />
          </tr>
          <tr><RowHead n="23" h={35} /></tr>
          <tr>
            <RowHead n="" h={4} />
            <td className="p-0" />
            <td colSpan={31} className="border-b border-black p-0" />
            <td colSpan={2} className="p-0" />
          </tr>
          {[['25', 16], ['26', 18]].map(([n, h]) => (
            <tr key={n}>
              <RowHead n={n} h={h} />
              <td className="border-r border-black p-0" />
              {HEADS.map(([span], i) => {
                const total = n === '26';
                const red = total && i >= 7 && i <= 11;
                return (
                  <td key={i} colSpan={span} className={`border-black p-0 pr-0.5 text-right font-["DejaVu_Sans_Condensed","DejaVu_Sans",sans-serif] text-[9px] leading-3 font-bold ${i < HEADS.length - 1 ? 'border-r' : ''} ${total ? '' : 'border-b'} ${red ? 'bg-[#ff0000]' : ''}`}>
                    {total && i === 6 ? 'Total:' : ''}
                  </td>
                );
              })}
              <td colSpan={2} className="p-0" />
            </tr>
          ))}
        </tbody>
      </table>
      <div className="flex flex-1">
        <div className="w-[26px] border-r border-[#9eb6ce] bg-[#e4ecf7]" />
        <div className="flex-1 border-t border-dashed border-black" />
      </div>
      <div className="pointer-events-none absolute top-4 bottom-0 left-[943px] border-l border-dashed border-black" />
    </div>
  );
}

function VScroll() {
  return (
    <div className="flex w-4 flex-col items-center bg-linear-to-r from-[#8fb0dc] via-[#7396c4] to-[#86a5d0]">
      <div className="mt-px h-1 w-3.5 border border-[#5a7fb5] bg-white" />
      <button type="button" aria-label="Κύλιση επάνω" className="flex h-[18px] items-center text-[#3a4f78]">
        <svg width="8" height="5" aria-hidden="true"><path d="M0 5h8L4 0z" fill="currentColor" /></svg>
      </button>
      <div className="flex h-8 w-3.5 flex-col items-center justify-center gap-px rounded-[1px] border border-[#56749f] bg-linear-to-r from-[#f5f8fd] to-[#c5d3ea]">
        {[0, 1, 2, 3].map((i) => <span key={i} className="h-px w-2 bg-[#6f86ad]" />)}
      </div>
      <div className="flex-1" />
      <button type="button" aria-label="Κύλιση κάτω" className="flex h-4 items-center text-[#3a4f78]">
        <svg width="8" height="5" aria-hidden="true"><path d="M0 0h8L4 5z" fill="currentColor" /></svg>
      </button>
    </div>
  );
}

function SheetTabs() {
  const nav = [
    ['Πρώτο φύλλο', 'M1 1v7M7 1v7L2.500 4.500z'],
    ['Προηγούμενο φύλλο', 'M6 1v7L2 4.500z'],
    ['Επόμενο φύλλο', 'M2 1v7l4-3.500z'],
    ['Τελευταίο φύλλο', 'M7 1v7M1 1v7l4.500-3.500z'],
  ];
  const tabs = ['SCHW008A-1', 'SCHW008A-2', 'SCHW008A-3', 'SCHW008A-4'];
  return (
    <div className="flex h-4 border-y border-[#7f9fce] bg-linear-to-b from-[#d4e3f7] to-[#b9cfee] text-[12px] text-[#24477f]">
      <div className="flex w-[63px] items-center justify-around border-r border-[#8fadd8]">
        {nav.map(([l, d]) => (
          <button key={l} type="button" aria-label={l}>
            <Svg w={8} h={9}><path d={d} fill="#15428b" stroke="#15428b" /></Svg>
          </button>
        ))}
      </div>
      {tabs.map((t, i) => (
        <button key={t} type="button" className="flex w-[99px] items-center justify-end leading-[14px]">
          {t}
          <Svg w={13} h={14}>{i < 3 ? <path d="M13 0L1 14h7L5 9.500" fill="none" stroke="#7f9fce" /> : <path d="M12.500 0v14" stroke="#7f9fce" />}</Svg>
        </button>
      ))}
      <button type="button" className="flex w-[99px] items-center justify-center bg-white leading-[14px] font-bold">SCHW008A-5</button>
      <button type="button" aria-label="Εισαγωγή φύλλου εργασίας" className="flex items-center">
        <Svg w={48} h={14}>
          <path d="M0 0h13L0 14z" fill="#fff" />
          <path d="M13 0L0 14h31L44 0z" fill="#d9e6f8" stroke="#7f9fce" />
          <path d="M13.500 4.500h12v6l-3 2h-9z" fill="#fff" stroke="#7284a3" />
          <path d="M14 1v7M10.500 4.500h7M11.500 2l5 5M16.500 2l-5 5" stroke="#e79a2c" />
        </Svg>
      </button>
      <div className="flex min-w-0 flex-1 items-stretch bg-[#8ba9d5]">
        <span className="w-1 border-x border-[#7f9fce] bg-white" />
        <button type="button" aria-label="Κύλιση αριστερά" className="flex w-7 items-center justify-center text-[#3a5586]">
          <svg width="5" height="8" aria-hidden="true"><path d="M5 0v8L0 4z" fill="currentColor" /></svg>
        </button>
        <div className="flex flex-1 items-center justify-center gap-px rounded-[1px] border border-[#7d8eac] bg-linear-to-b from-[#f3f6fb] via-[#dfe5f0] to-[#c3cddf]">
          {[0, 1, 2, 3].map((i) => <span key={i} className="h-1.5 w-px bg-[#5f7192]" />)}
        </div>
        <button type="button" aria-label="Κύλιση δεξιά" className="flex w-7 items-center justify-center pl-2 text-[#3a5586]">
          <svg width="5" height="8" aria-hidden="true"><path d="M0 0v8l5-4z" fill="currentColor" /></svg>
        </button>
        <span className="w-1 border-x border-[#7f9fce] bg-white" />
        <span className="w-4" />
      </div>
    </div>
  );
}

function StatusBar() {
  const views = [
    ['Κανονική', 'M1.500 1.500h12v10h-12zM1.500 4.500h12M1.500 8h12M5.500 1.500v10M9.500 1.500v10'],
    ['Διάταξη σελίδας', 'M1.500 1.500h12v10h-12zM4.500 3.500h6v6h-6z'],
    ['Προεπισκόπηση αλλαγών', 'M1.500 1.500h12v10h-12zM4.500 1.500v6h6v-6M7.500 1.500v6'],
  ];
  return (
    <footer className="flex h-6 items-stretch bg-linear-to-b from-[#e3eefb] via-[#bdd5f6] to-[#dbe9fb] text-[#15305f]">
      <div className="flex w-[51px] items-center border-r border-[#9dbbe4] pl-[7px] text-[11px]">Έτοιμο</div>
      <div className="flex-1" />
      <div className="flex items-center border-l border-[#7fa2d8] bg-linear-to-b from-[#c6dbf8] via-[#8fb3e6] to-[#b8d1f3] pr-1 pl-1.5">
        <div className="flex h-[18px] border border-[#8fabd6]">
          {views.map(([l, d], i) => (
            <button key={l} type="button" aria-label={l} className={i === 0 ? 'flex w-[18px] items-center justify-center bg-[#ffe3a0]' : 'flex w-[18px] items-center justify-center bg-[#dde3ec]'}>
              <Svg w={15} h={13}><path d={d} fill="#fff" stroke="#5d6675" /></Svg>
            </button>
          ))}
        </div>
        <button type="button" className="ml-1.5 w-6 text-[11px]">90%</button>
        <button type="button" aria-label="Σμίκρυνση" className="ml-3.5">
          <Svg w={16} h={16}><circle cx="8" cy="8" r="7" fill="#edf2fa" stroke="#52688f" strokeWidth="1.300" /><path d="M4.500 8h7" stroke="#33435f" strokeWidth="2" /></Svg>
        </button>
        <input
          type="range"
          min="0"
          max="100"
          defaultValue="44"
          aria-label="Ζουμ"
          className="h-4 w-[102px] appearance-none bg-linear-to-b from-transparent from-45% via-white via-50% to-transparent to-55% [&::-webkit-slider-thumb]:h-[13px] [&::-webkit-slider-thumb]:w-[9px] [&::-webkit-slider-thumb]:appearance-none [&::-webkit-slider-thumb]:rounded-b-full [&::-webkit-slider-thumb]:border [&::-webkit-slider-thumb]:border-[#52688f] [&::-webkit-slider-thumb]:bg-[#e8eef8]"
        />
        <button type="button" aria-label="Μεγέθυνση">
          <Svg w={16} h={16}><circle cx="8" cy="8" r="7" fill="#edf2fa" stroke="#52688f" strokeWidth="1.300" /><path d="M4.500 8h7M8 4.500v7" stroke="#33435f" strokeWidth="2" /></Svg>
        </button>
      </div>
    </footer>
  );
}

/* ---------- taskbar ---------- */

const IconFirefox = () => (
  <Svg>
    <circle cx="8" cy="8" r="7" fill="#e8701a" />
    <circle cx="8.500" cy="6.500" r="4.200" fill="#2c4fa8" />
    <path d="M1 4c0 5 4 8 8 6.500 2-.5 3-2 3-4C14 10 12 14.500 8 15S0 11 1 4z" fill="#f9b233" />
    <path d="M4 4l3 0 2 2.500-3 1.500z" fill="#f08a24" />
  </Svg>
);
const IconCalc = () => (
  <Svg w={14}>
    <path d="M1.500.5h11v15h-11z" fill="#c8d7f2" stroke="#6f8fcb" />
    <path d="M3 2h8v3H3z" fill="#fff" />
    <path d="M3 7.500h8M3 10h8M3 12.500h8" stroke="#4a6ec0" strokeWidth="1.500" strokeDasharray="2 1" />
  </Svg>
);
const IconIE = () => (
  <Svg>
    <path d="M12.500 11A5 5 0 1 1 13 8.500H4" fill="none" stroke="#5cc0f7" strokeWidth="2.600" />
    <path d="M2 14C-2 10 8 0 15 2" fill="none" stroke="#bfe6ff" strokeWidth="1.300" />
  </Svg>
);
const IconDesk = () => (
  <Svg>
    <rect x="1" y="2" width="12" height="12" rx="2.500" fill="#f4f9fe" stroke="#58a6e4" />
    <path d="M10 9a3.200 3.200 0 1 1-2-4" fill="none" stroke="#2b6fbd" strokeWidth="1.600" />
    <path d="M6 9.500l7-8 2.500 2-7 7z" fill="#7cc4f5" stroke="#1d5b9c" />
  </Svg>
);
const IconMail = () => (
  <Svg>
    <path d="M6 2.500l9 1.500v10l-9-1.500z" fill="#fff" stroke="#2a60b0" />
    <path d="M6 3l4 5 5-3.500" fill="none" stroke="#2a60b0" />
    <path d="M1 2c-1 6 1 8 5 8v3l5-4.500L6 5v2.500C4 7.500 2 6 1 2z" fill="#cfe9fd" stroke="#3f7fd0" strokeWidth=".8" />
  </Svg>
);
const IconWord = () => (
  <Svg>
    <path d="M3.500 1.500h11v13h-11z" fill="#fff" stroke="#86a4d8" />
    <rect x="1" y="4" width="10" height="9" fill="#f3f7fe" stroke="#2a56a8" />
    <path d="M2.800 6L4 11l2-4 1.500 4L9.300 6M12 5h2M12 8h2M12 11h2" fill="none" stroke="#2a56a8" strokeWidth="1.300" />
  </Svg>
);
const IconExcel = () => (
  <Svg>
    <path d="M1.500 1.500h10l3 3v10h-13z" fill="#f4fbf4" stroke="#3e8b3e" />
    <path d="M4 5l6 8M10 5l-6 8" stroke="#2f8a2f" strokeWidth="2.400" />
  </Svg>
);

function Task({ icon, children, active, arrow }) {
  return (
    <button
      type="button"
      className={`flex h-6 w-[127px] items-center gap-[3px] rounded-[3px] pr-1.5 pl-2 whitespace-nowrap text-white ${active ? 'bg-[#1b48a8] shadow-[inset_1px_1px_2px_#102f78]' : 'bg-linear-to-b from-[#5c9bfa] via-[#3a80f3] to-[#3574e8] shadow-[1px_0_0_#1c4fb8]'}`}
    >
      {icon}
      <span className="flex-1 overflow-hidden text-left">{children}</span>
      {arrow && <Arrow className="text-white" />}
    </button>
  );
}

const Grip = () => (
  <Svg w={6} h={24} className="opacity-70">
    <path d="M1.500 2v20M4.500 4v20" stroke="#143c96" strokeWidth="1.500" strokeDasharray="1.500 2.500" />
  </Svg>
);

function Taskbar() {
  const quick = [
    ['Firefox', <IconFirefox />], ['Αριθμομηχανή', <IconCalc />], ['Internet Explorer', <IconIE />],
    ['Επιφάνεια εργασίας', <IconDesk />], ['Outlook', <IconMail />], ['Word', <IconWord />],
  ];
  return (
    <div className='flex h-8 items-end border-t-2 border-[#2a62cf] bg-linear-to-b from-[#3d84f0] via-[#245fdc] to-[#1f50c4] font-["DejaVu_Sans_Condensed","DejaVu_Sans",sans-serif] text-[11px] text-white'>
      <button type="button" className="flex h-full w-[115px] items-center gap-1.5 rounded-r-[10px] bg-linear-to-b from-[#66b765] via-[#3c9a3c] to-[#2c7f2d] pl-2.5 shadow-[2px_0_3px_#123a8a]">
        <Svg w={18} h={17}>
          <path d="M3.500 2c2-1 3.500-1 5 0L7 8C5.500 7 4 7 2 8z" fill="#ee5a24" />
          <path d="M9.500 2.500c2 1 4 1 6.500 0L14.500 8.500c-2 1-4 1-6 0z" fill="#8cc63f" />
          <path d="M1.700 9c2-1 3.500-1 5 0l-1.500 6c-1.500-1-3-1-5 0z" fill="#4a9df0" />
          <path d="M8 9.500c2 1 4 1 6 0L12.500 15.500c-2 1-4 1-6 0z" fill="#ffd02e" />
        </Svg>
        <span className='font-["Noto_Sans",sans-serif] text-[17px] leading-5 font-bold italic [text-shadow:1px_1px_1px_#1d4d1f]'>έναρξη</span>
      </button>
      <div className="flex h-full flex-1 items-center pl-2">
        <Grip />
        <div className="ml-2 flex w-[132px] items-center justify-between">
          {quick.map(([l, icon]) => <button key={l} type="button" aria-label={l}>{icon}</button>)}
        </div>
        <button type="button" aria-label="Περισσότερα" className="mr-1.5 ml-8 self-start pt-1">
          <Svg w={9} h={7}><path d="M1 1l2.500 2.500L1 6M5 1l2.500 2.500L5 6" fill="none" stroke="#dbe8ff" strokeWidth="1.200" /></Svg>
        </button>
        <Grip />
        <div className="ml-1.5 flex min-w-0 flex-1 gap-[3px]">
          <Task icon={<IconMail />}>Εισερχόμενα - ...</Task>
          <Task icon={<IconFirefox />} arrow><span className="font-bold text-[#ffb84d]">4</span> Firefox</Task>
          <Task icon={<IconWord />}>INTRA-REPOR...</Task>
          <Task icon={<IconExcel />} active>Microsoft Excel...</Task>
        </div>
        <Grip />
        <button type="button" className="mr-6 w-6">EN</button>
      </div>
      <div className="flex h-full items-center bg-linear-to-b from-[#2bb4f7] via-[#129ae8] to-[#0f86dc] pr-3">
        <button type="button" aria-label="Εμφάνιση κρυφών εικονιδίων">
          <Svg w={18} h={18}>
            <circle cx="9" cy="9" r="8" fill="#2f7fe6" stroke="#8fcaf8" />
            <path d="M11 5L7 9l4 4" fill="none" stroke="#fff" strokeWidth="2" />
          </Svg>
        </button>
        <Svg w={17} h={18}>
          <path d="M7 6l7-2 2 4-4 8-4-1z" fill="#d9dde3" stroke="#7a828e" />
          <circle cx="5" cy="5" r="4.500" fill="#e02020" />
          <path d="M3 3l4 4M7 3L3 7" stroke="#fff" strokeWidth="1.500" />
        </Svg>
        <Svg w={18} h={14} className="ml-0.5">
          <path d="M1 8l3-3 3 1 3-4 3 2 4-1-2 4 2 3-4-1-2 4-3-2-5 1 2-3z" fill="#25428c" stroke="#b5cdf5" strokeWidth=".8" />
          <path d="M5 7l3 1M10 5l2 2" stroke="#dfe9fb" strokeWidth="1.500" />
        </Svg>
        <time className="ml-1.5 whitespace-nowrap">11:14 πμ</time>
      </div>
    </div>
  );
}

export default function App() {
  return (
    <div className={`relative flex min-h-screen flex-col overflow-hidden bg-[#bfdbff] ${UI}`}>
      <TitleBar />
      <TabStrip />
      <Orb />
      <Ribbon />
      <FormulaBar />
      <main className="mt-[3px] flex flex-1 border-t border-[#7f9fce]">
        <Sheet />
        <VScroll />
      </main>
      <SheetTabs />
      <StatusBar />
      <Taskbar />
    </div>
  );
}
